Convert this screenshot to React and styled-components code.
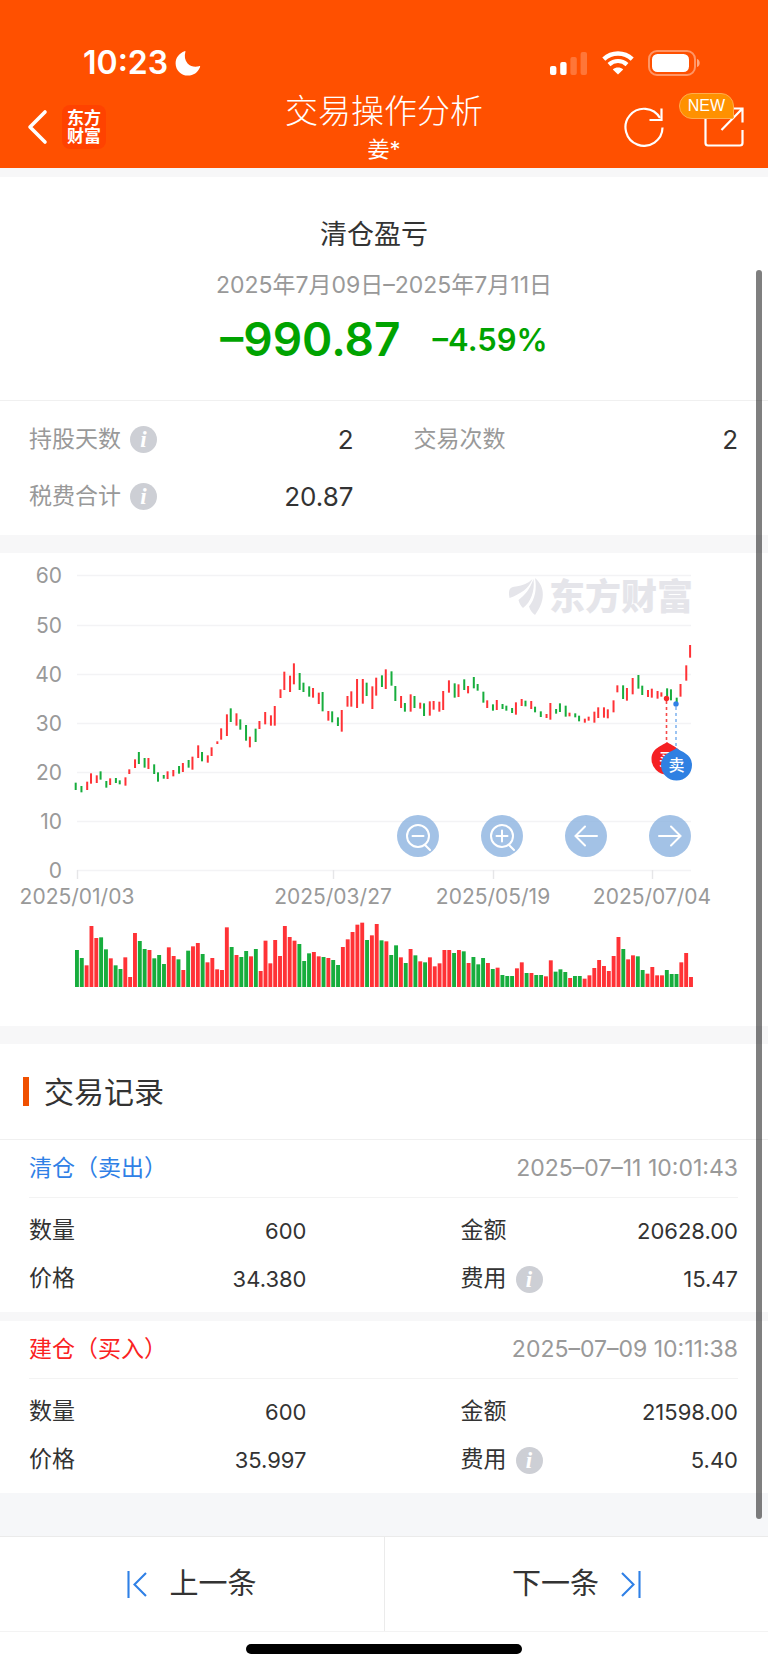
import styled, { createGlobalStyle } from "styled-components";

const GlobalStyle = createGlobalStyle`
    * {
        box-sizing: border-box;
    }

    body {
        margin: 0;
        background: #ffffff;
        color: #333333;
        font-family: Inter, "Noto Sans CJK SC", sans-serif;
        line-height: 1.2;
    }

    button {
        padding: 0;
        border: 0;
        background: none;
        color: inherit;
        font: inherit;
        cursor: pointer;
    }

    h1, h2, h3, p {
        margin: 0;
        font-weight: 400;
    }

    svg {
        display: block;
    }
`;

const Page = styled.div`
    position: relative;
`;

const Header = styled.header`
    background: #ff5000;
    color: #ffffff;
`;

const StatusBar = styled.div`
    display: flex;
    align-items: center;
    justify-content: space-between;
    height: 90px;
    padding: 35px 68px 0 83px;
`;

const Clock = styled.div`
    display: flex;
    align-items: center;
    gap: 7px;
    font-size: 32px;
    font-weight: 600;
    line-height: 40px;
`;

const StatusIcons = styled.div`
    display: flex;
    align-items: center;
    gap: 14px;
`;

const NavBar = styled.div`
    display: grid;
    grid-template-columns: 1fr auto 1fr;
    align-items: center;
    height: 78px;
    padding: 0 24px;
`;

const NavLeft = styled.div`
    display: flex;
    align-items: center;
    gap: 14px;
    padding: 0 0 5px 2px;
`;

const Brand = styled.div`
    width: 44px;
    padding: 4px 0;
    border-radius: 8px;
    background: #ff4200;
    font-size: 17px;
    font-weight: 700;
    line-height: 18px;
    text-align: center;
`;

const NavTitle = styled.h1`
    font-size: 33px;
    font-weight: 300;
    line-height: 40px;
`;

const NavSubtitle = styled.p`
    font-size: 22px;
    line-height: 36px;
`;

const NavCenter = styled.div`
    text-align: center;
`;

const NavRight = styled.div`
    display: flex;
    justify-content: flex-end;
    gap: 40px;
    padding-bottom: 5px;
`;

const NavButton = styled.button`
    position: relative;
`;

const NewBadge = styled.span`
    position: absolute;
    top: -14px;
    right: 10px;
    padding: 0 8px;
    border: 1px solid #ffad4d;
    border-radius: 13px 13px 2px 13px;
    background: #ff9100;
    font-family: "Liberation Sans", sans-serif;
    font-size: 16px;
    line-height: 24px;
`;

const Band = styled.div`
    height: ${({ $height }) => $height}px;
    background: ${({ $color }) => $color || "#f7f7f8"};
`;

const Summary = styled.section`
    padding: 38px 0 29px;
    border-bottom: 1px solid #f0f0f0;
    text-align: center;
`;

const SummaryTitle = styled.h2`
    padding-right: 20px;
    font-size: 27px;
    line-height: 40px;
`;

const SummaryRange = styled.p`
    margin-top: 10px;
    color: #999999;
    font-size: 23px;
    line-height: 40px;
`;

const Profit = styled.div`
    display: flex;
    align-items: center;
    justify-content: center;
    gap: 32px;
    height: 62px;
    margin-top: 4px;
    color: #00a300;
    font-weight: 600;
`;

const ProfitAmount = styled.span`
    font-size: 46px;
`;

const ProfitRate = styled.span`
    font-size: 31px;
`;

const Stats = styled.section`
    display: grid;
    grid-template-columns: 1fr 1fr;
    column-gap: 60px;
    padding: 10px 30px 10px 29px;
`;

const Stat = styled.div`
    display: flex;
    align-items: center;
    justify-content: space-between;
    height: 57px;
`;

const StatLabel = styled.span`
    display: flex;
    align-items: center;
    gap: 9px;
    color: #999999;
    font-size: 23px;
`;

const StatValue = styled.span`
    font-size: 26px;
`;

const InfoButton = styled.button`
    width: 27px;
    height: 27px;
    border-radius: 50%;
    background: #cdcfd5;
    color: #ffffff;
    font-family: "Liberation Serif", serif;
    font-size: 23px;
    font-style: italic;
    font-weight: 700;
    line-height: 27px;
    text-align: center;
`;

const ChartSection = styled.section`
    position: relative;
`;

const ChartSvg = styled.svg`
    width: 100%;
    height: auto;
`;

const AxisText = styled.text`
    fill: #999999;
    font-size: 21px;
`;

const Watermark = styled.text`
    fill: #e5e5ea;
    font-family: "Noto Sans CJK SC", sans-serif;
    font-size: 36px;
    font-weight: 900;
`;

const PinText = styled.text`
    fill: #ffffff;
    font-family: "Noto Sans CJK SC", sans-serif;
    font-size: 16px;
    font-weight: 500;
`;

const ChartTools = styled.div`
    position: absolute;
    top: 55.4%;
    right: 10%;
    display: flex;
    gap: 42px;
`;

const ToolButton = styled.button`
    display: flex;
    align-items: center;
    justify-content: center;
    width: 42px;
    height: 42px;
    border-radius: 50%;
    background: rgba(143, 180, 224, 0.82);
`;

const RecordsHeading = styled.div`
    display: flex;
    align-items: center;
    gap: 15px;
    height: 96px;
    padding: 0 23px;
    border-bottom: 1px solid #f0f0f0;

    &::before {
        content: "";
        width: 6px;
        height: 29px;
        background: #f05000;
    }
`;

const RecordsTitle = styled.h2`
    font-size: 30px;
    line-height: 40px;
`;

const RecordCard = styled.article`
    padding: 0 30px 0 29px;
`;

const RecordHead = styled.div`
    display: flex;
    align-items: center;
    justify-content: space-between;
    height: 58px;
    border-bottom: 1px solid #f3f3f3;
`;

const RecordType = styled.h3`
    color: ${({ $side }) => ($side === "buy" ? "#fa2222" : "#2f80e6")};
    font-size: 23px;
`;

const RecordTime = styled.time`
    color: #999999;
    font-size: 23px;
`;

const RecordGrid = styled.div`
    display: grid;
    grid-template-columns: 1fr 1fr;
    column-gap: 154px;
    padding: 9px 0;
`;

const RecordField = styled.div`
    display: flex;
    align-items: center;
    justify-content: space-between;
    height: 48px;
`;

const FieldLabel = styled.span`
    display: flex;
    align-items: center;
    gap: 9px;
    font-size: 23px;
`;

const FieldValue = styled.span`
    font-size: 22px;
`;

const Footer = styled.nav`
    display: grid;
    grid-template-columns: 1fr 1fr;
    border-top: 1px solid #ebebeb;
    border-bottom: 1px solid #f3f3f3;
`;

const PagerButton = styled.button`
    display: flex;
    align-items: center;
    justify-content: center;
    gap: 22px;
    height: 94px;
    font-size: 29px;

    & + & {
        border-left: 1px solid #ebebeb;
    }
`;

const HomeArea = styled.div`
    display: flex;
    justify-content: center;
    padding: 12px 0 16px;
`;

const HomeIndicator = styled.div`
    width: 36%;
    height: 10px;
    border-radius: 5px;
    background: #000000;
`;

const ScrollThumb = styled.div`
    position: absolute;
    top: 270px;
    right: 6px;
    bottom: 151px;
    width: 6px;
    border-radius: 3px;
    background: rgba(0, 0, 0, 0.5);
`;

// [direction, high, low], measured from the chart top at 3x
const candles = [
    ["g", 689, 711], ["g", 699, 718], ["r", 686, 711], ["r", 661, 692],
    ["r", 667, 690], ["g", 655, 680], ["g", 684, 704], ["r", 676, 696],
    ["g", 675, 690], ["g", 682, 694], ["r", 673, 698], ["r", 649, 663],
    ["r", 619, 645], ["g", 597, 633], ["g", 615, 644], ["r", 615, 648],
    ["g", 634, 663], ["g", 658, 686], ["g", 666, 677], ["r", 655, 678],
    ["r", 651, 670], ["g", 639, 662], ["r", 630, 657], ["g", 621, 644],
    ["r", 611, 650], ["r", 577, 615], ["g", 597, 625], ["r", 607, 629],
    ["r", 583, 609], ["r", 565, 573], ["r", 526, 560], ["r", 484, 549],
    ["g", 466, 507], ["r", 481, 518], ["g", 499, 530], ["g", 516, 563],
    ["r", 551, 583], ["g", 527, 567], ["r", 504, 528], ["r", 477, 514],
    ["r", 487, 518], ["r", 459, 518], ["r", 409, 435], ["r", 356, 411],
    ["r", 368, 417], ["r", 331, 394], ["g", 360, 411], ["g", 389, 417],
    ["g", 400, 431], ["r", 405, 434], ["r", 419, 453], ["g", 417, 475],
    ["r", 474, 503], ["g", 475, 508], ["g", 493, 519], ["r", 471, 536],
    ["r", 429, 461], ["r", 415, 461], ["r", 378, 465], ["r", 378, 452],
    ["g", 389, 429], ["r", 400, 468], ["r", 374, 428], ["g", 367, 402],
    ["r", 349, 408], ["g", 355, 398], ["g", 399, 444], ["r", 429, 465],
    ["g", 450, 476], ["r", 424, 476], ["g", 429, 465], ["r", 449, 467],
    ["g", 451, 489], ["r", 445, 488], ["r", 444, 470], ["r", 446, 476],
    ["r", 414, 471], ["r", 382, 419], ["g", 391, 434], ["r", 394, 432],
    ["g", 379, 411], ["r", 399, 421], ["g", 372, 406], ["g", 393, 413],
    ["g", 416, 449], ["r", 442, 465], ["g", 454, 473], ["r", 441, 471],
    ["g", 453, 468], ["g", 458, 473], ["g", 465, 480], ["r", 448, 485],
    ["r", 438, 459], ["g", 443, 460], ["r", 444, 468], ["g", 461, 478],
    ["g", 475, 492], ["r", 483, 495], ["r", 450, 500], ["g", 468, 482],
    ["g", 451, 477], ["g", 458, 491], ["r", 479, 490], ["g", 481, 493],
    ["g", 488, 505], ["r", 497, 509], ["r", 491, 503], ["r", 476, 509],
    ["r", 463, 495], ["r", 463, 494], ["r", 469, 496], ["r", 442, 478],
    ["r", 397, 418], ["g", 397, 438], ["r", 405, 443], ["r", 375, 424],
    ["g", 366, 407], ["g", 398, 426], ["r", 411, 432], ["r", 407, 434],
    ["r", 414, 437], ["r", 418, 431], ["g", 406, 438], ["g", 409, 442],
    ["g", 434, 453], ["r", 393, 431], ["r", 337, 383], ["r", 276, 314],
];

// volume of each day, same order and scale as the candles
const volumes = [
    111, 87, 65, 183, 147, 149, 113, 86, 65, 54, 89, 30, 162, 138, 114, 111,
    86, 96, 69, 119, 93, 83, 51, 109, 122, 132, 99, 74, 87, 53, 51, 179,
    120, 96, 90, 108, 92, 114, 48, 139, 71, 141, 93, 183, 150, 139, 129, 78,
    101, 105, 92, 90, 87, 81, 66, 120, 143, 165, 187, 193, 141, 155, 189, 140,
    137, 96, 125, 89, 72, 114, 95, 77, 74, 89, 62, 71, 111, 111, 102, 111,
    107, 72, 90, 68, 87, 72, 54, 58, 36, 33, 33, 56, 74, 42, 42, 36,
    36, 32, 80, 46, 53, 45, 27, 33, 33, 25, 35, 57, 81, 63, 48, 93,
    150, 114, 83, 95, 92, 51, 40, 60, 35, 35, 51, 39, 39, 74, 102, 30,
];

// colours of the volume bars, ten days to a group
const volumeSides = [
    "ggrrrggrgg", "rrrggrgggr", "rgrgrrgrrr", "rrgrggrgrr",
    "rrrrrrgggr", "rgrggrrrrr", "grrgrggrgr", "grgrrrrrgr",
    "grgggrgrgg", "grrgrggrrg", "ggrggrrrrr", "rrrgrrggrr",
    "rrgggrrr",
].join("");

const gridLines = [
    { label: "60", y: 22 },
    { label: "50", y: 72 },
    { label: "40", y: 121 },
    { label: "30", y: 170 },
    { label: "20", y: 219 },
    { label: "10", y: 268 },
    { label: "0", y: 317 },
];

const dates = [
    { label: "2025/01/03", x: 77 },
    { label: "2025/03/27", x: 333 },
    { label: "2025/05/19", x: 493 },
    { label: "2025/07/04", x: 652 },
];

const records = [
    {
        side: "sell",
        type: "清仓（卖出）",
        time: "2025–07–11 10:01:43",
        amount: "600",
        total: "20628.00",
        price: "34.380",
        fee: "15.47",
    },
    {
        side: "buy",
        type: "建仓（买入）",
        time: "2025–07–09 10:11:38",
        amount: "600",
        total: "21598.00",
        price: "35.997",
        fee: "5.40",
    },
];

const candleX = (index) => 75.7 + 1.914 * Math.ceil((index * 4.835) / 1.914);

const sideColor = (side) => (side === "r" ? "#ff3236" : "#17ad3d");

const MoonIcon = () => (
    <svg width="26" height="26" viewBox="0 0 26 26" fill="#ffffff" aria-hidden="true">
        <path d="M9.6 1.2 C10.2 .6 10.6 .9 10.4 1.8 C9.2 6 9.8 10.4 12.6 13.4 C15.6 16.4 19.8 17.4 24 16.2 C25 15.9 25.4 16.4 25 17.2 C22.8 22.4 18.4 25.6 13 25.6 C6 25.6 .6 20.2 .6 13.2 C.6 7.8 4.2 3 9.6 1.2 Z" />
    </svg>
);

const SignalIcon = () => (
    <svg width="38" height="24" viewBox="0 0 38 24" fill="#ffffff" aria-hidden="true">
        <rect x="0" y="15" width="6.4" height="9" rx="2" />
        <rect x="10.2" y="11" width="6.4" height="13" rx="2" />
        <rect x="20.4" y="6" width="6.4" height="18" rx="2" opacity=".22" />
        <rect x="30.6" y="1" width="6.4" height="23" rx="2" opacity=".22" />
    </svg>
);

const WifiIcon = () => (
    <svg width="32" height="24" viewBox="0 0 32 24" fill="none" stroke="#ffffff" aria-hidden="true">
        <path d="M1.8 8.2 C9.8 .6 22.2 .6 30.2 8.2" strokeWidth="4.4" />
        <path d="M7 13.6 C12.2 8.8 19.8 8.8 25 13.6" strokeWidth="4.2" />
        <path d="M16 23.6 L10.8 18.4 C13.8 15.8 18.2 15.8 21.2 18.4 Z" fill="#ffffff" stroke="none" />
    </svg>
);

const BatteryIcon = () => (
    <svg width="52" height="26" viewBox="0 0 52 26" fill="none" aria-hidden="true">
        <rect x="1" y="1" width="46" height="24" rx="8" stroke="#ffffff" strokeOpacity=".4" strokeWidth="2" />
        <rect x="4" y="4" width="37" height="18" rx="5.5" fill="#ffffff" />
        <path d="M49 9 C52.6 10 52.6 16 49 17 Z" fill="#ffffff" fillOpacity=".5" />
    </svg>
);

const BackIcon = () => (
    <svg width="22" height="36" viewBox="0 0 22 36" fill="none" stroke="#ffffff" strokeWidth="3.6" strokeLinecap="round" strokeLinejoin="round">
        <path d="M19 3 L4 18 L19 33" />
    </svg>
);

const RefreshIcon = () => (
    <svg width="40" height="40" viewBox="0 0 40 40" fill="none" stroke="#ffffff" strokeWidth="2.2">
        <path d="M38.5 20.5 A18.5 18.5 0 1 1 36 11" />
        <path d="M37.5 1.5 V13 H25.5" />
    </svg>
);

const ShareIcon = () => (
    <svg width="40" height="40" viewBox="0 0 40 40" fill="none" stroke="#ffffff" strokeWidth="2.2">
        <path d="M15 1.5 H1.5 V36 Q1.5 38.5 4 38.5 H36 Q38.5 38.5 38.5 36 V23" />
        <path d="M28 1.5 H38.5 V15.5 M38 2 L17.5 23" />
    </svg>
);

const FirstIcon = () => (
    <svg width="20" height="27" viewBox="0 0 20 27" fill="none" stroke="#2f80e6" strokeWidth="2.1">
        <path d="M1.5 0 V27 M19 2 L7.5 13.5 L19 25" />
    </svg>
);

const LastIcon = () => (
    <svg width="20" height="27" viewBox="0 0 20 27" fill="none" stroke="#2f80e6" strokeWidth="2.1">
        <path d="M18.5 0 V27 M1 2 L12.5 13.5 L1 25" />
    </svg>
);

const toolIcons = [
    { name: "缩小", path: "M32 21 A11 11 0 1 1 10 21 A11 11 0 1 1 32 21 Z M28 30 L33 35 M15.5 21 H26.5" },
    { name: "放大", path: "M32 21 A11 11 0 1 1 10 21 A11 11 0 1 1 32 21 Z M28 30 L33 35 M15.5 21 H26.5 M21 15.5 V26.5" },
    { name: "左移", path: "M32 21 H10.5 M20 11.5 L10.5 21 L20 30.5" },
    { name: "右移", path: "M10 21 H31.5 M22 11.5 L31.5 21 L22 30.5" },
];

const Pin = ({ x, y, color, label }) => (
    <g>
        <path
            d={`M${x} ${y - 17} C${x + 5} ${y - 13} ${x + 15.5} ${y - 11} ${x + 15.5} ${y} A15.5 15.5 0 0 1 ${x - 15.5} ${y} C${x - 15.5} ${y - 11} ${x - 5} ${y - 13} ${x} ${y - 17} Z`}
            fill={color}
        />
        <PinText x={x} y={y + 6} textAnchor="middle">{label}</PinText>
    </g>
);

const PriceChart = () => (
    <ChartSection>
        <ChartSvg viewBox="0 0 768 473" role="img" aria-label="股价走势">
            {gridLines.map(({ label, y }) => (
                <g key={label}>
                    <path d={`M77 ${y + 0.5} H691`} stroke="#f3f3f5" strokeWidth="1.6" />
                    <AxisText x="62" y={y + 8} textAnchor="end">{label}</AxisText>
                </g>
            ))}
            {dates.map(({ label, x }) => (
                <g key={label}>
                    <path d={`M${x + 0.5} 317 V326`} stroke="#e6e6e8" strokeWidth="1.4" />
                    <AxisText x={x} y="351" textAnchor="middle">{label}</AxisText>
                </g>
            ))}
            <g fill="#e5e5ea">
                <path d="M509.5 45 C508 36 510 34 516 33.500 C523 32.500 528 30.500 532.500 26 C529 35 521 41 509.500 45 Z" />
                <path d="M533.500 26 C530 36 525 42 518.500 47 C519.500 51 521 53 523 55 C531 49 535 38 533.500 26 Z" />
                <path d="M535 25 C546 34 545 49 535 62 C532 60 530 57 529 53.500 C535 46 537 36 535 25 Z" />
            </g>
            <Watermark x="549" y="57">东方财富</Watermark>
            {candles.map(([side, high, low], index) => (
                <rect
                    key={index}
                    x={candleX(index) - 1}
                    y={high / 3}
                    width="2"
                    height={(low - high) / 3}
                    fill={sideColor(side)}
                />
            ))}
            {volumes.map((volume, index) => (
                <rect
                    key={index}
                    x={75 + index * 4.835}
                    y={434 - volume / 3}
                    width="3.9"
                    height={volume / 3}
                    fill={sideColor(volumeSides[index])}
                />
            ))}
            <path d="M666.5 148 V190" stroke="#f54a4a" strokeWidth="1.6" strokeDasharray="3 3" />
            <path d="M676 154 V196" stroke="#9cc4f2" strokeWidth="2" strokeDasharray="3 3" />
            <circle cx="666.5" cy="145.5" r="2.7" fill="#f52a2a" />
            <circle cx="676" cy="151" r="2.7" fill="#2f80e6" />
            <Pin x={667} y={206} color="#f52023" label="买" />
            <Pin x={676.5} y={212} color="#2f80e2" label="卖" />
        </ChartSvg>
        <ChartTools>
            {toolIcons.map(({ name, path }) => (
                <ToolButton key={name} type="button" aria-label={name}>
                    <svg width="42" height="42" viewBox="0 0 42 42" fill="none" stroke="#ffffff" strokeWidth="2" strokeLinecap="round">
                        <path d={path} />
                    </svg>
                </ToolButton>
            ))}
        </ChartTools>
    </ChartSection>
);

const Info = ({ label }) => (
    <InfoButton type="button" aria-label={`${label}说明`}>i</InfoButton>
);

const Record = ({ record }) => (
    <RecordCard>
        <RecordHead>
            <RecordType $side={record.side}>{record.type}</RecordType>
            <RecordTime>{record.time}</RecordTime>
        </RecordHead>
        <RecordGrid>
            <RecordField>
                <FieldLabel>数量</FieldLabel>
                <FieldValue>{record.amount}</FieldValue>
            </RecordField>
            <RecordField>
                <FieldLabel>金额</FieldLabel>
                <FieldValue>{record.total}</FieldValue>
            </RecordField>
            <RecordField>
                <FieldLabel>价格</FieldLabel>
                <FieldValue>{record.price}</FieldValue>
            </RecordField>
            <RecordField>
                <FieldLabel>费用<Info label="费用" /></FieldLabel>
                <FieldValue>{record.fee}</FieldValue>
            </RecordField>
        </RecordGrid>
    </RecordCard>
);

const App = () => {
    return (
        <Page>
            <GlobalStyle />
            <Header>
                <StatusBar>
                    <Clock>10:23<MoonIcon /></Clock>
                    <StatusIcons>
                        <SignalIcon />
                        <WifiIcon />
                        <BatteryIcon />
                    </StatusIcons>
                </StatusBar>
                <NavBar>
                    <NavLeft>
                        <NavButton type="button" aria-label="返回"><BackIcon /></NavButton>
                        <Brand>东方<br />财富</Brand>
                    </NavLeft>
                    <NavCenter>
                        <NavTitle>交易操作分析</NavTitle>
                        <NavSubtitle>姜*</NavSubtitle>
                    </NavCenter>
                    <NavRight>
                        <NavButton type="button" aria-label="刷新"><RefreshIcon /></NavButton>
                        <NavButton type="button" aria-label="分享">
                            <ShareIcon />
                            <NewBadge>NEW</NewBadge>
                        </NavButton>
                    </NavRight>
                </NavBar>
            </Header>
            <Band $height={9} />
            <main>
                <Summary>
                    <SummaryTitle>清仓盈亏</SummaryTitle>
                    <SummaryRange>2025年7月09日–2025年7月11日</SummaryRange>
                    <Profit>
                        <ProfitAmount>–990.87</ProfitAmount>
                        <ProfitRate>–4.59%</ProfitRate>
                    </Profit>
                </Summary>
                <Stats>
                    <Stat>
                        <StatLabel>持股天数<Info label="持股天数" /></StatLabel>
                        <StatValue>2</StatValue>
                    </Stat>
                    <Stat>
                        <StatLabel>交易次数</StatLabel>
                        <StatValue>2</StatValue>
                    </Stat>
                    <Stat>
                        <StatLabel>税费合计<Info label="税费合计" /></StatLabel>
                        <StatValue>20.87</StatValue>
                    </Stat>
                </Stats>
                <Band $height={18} />
                <PriceChart />
                <Band $height={18} />
                <section>
                    <RecordsHeading>
                        <RecordsTitle>交易记录</RecordsTitle>
                    </RecordsHeading>
                    <Record record={records[0]} />
                    <Band $height={9} />
                    <Record record={records[1]} />
                </section>
                <Band $height={43} $color="#f6f7f9" />
            </main>
            <Footer>
                <PagerButton type="button"><FirstIcon />上一条</PagerButton>
                <PagerButton type="button">下一条<LastIcon /></PagerButton>
            </Footer>
            <HomeArea>
                <HomeIndicator />
            </HomeArea>
            <ScrollThumb />
        </Page>
    );
};

export default App;
